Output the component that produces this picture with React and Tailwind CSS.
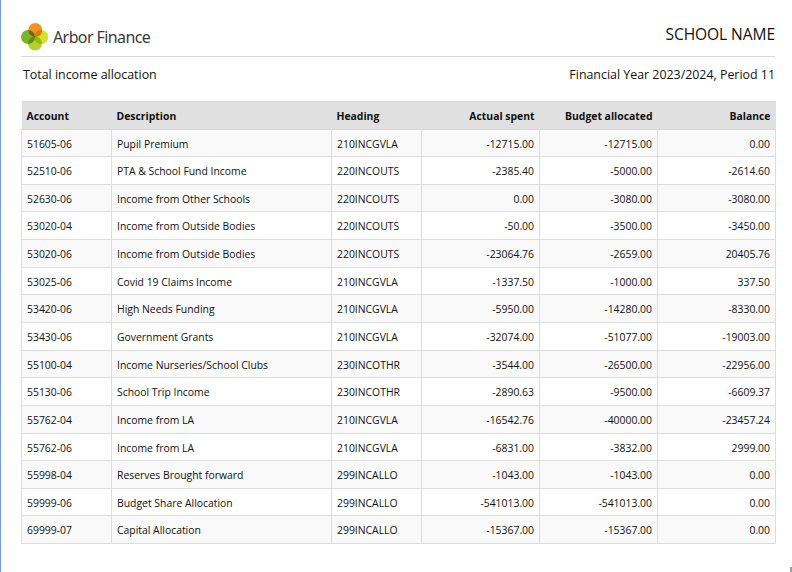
import React from "react";

const rows = [
  ["51605-06", "Pupil Premium", "210INCGVLA", "-12715.00", "-12715.00", "0.00"],
  ["52510-06", "PTA & School Fund Income", "220INCOUTS", "-2385.40", "-5000.00", "-2614.60"],
  ["52630-06", "Income from Other Schools", "220INCOUTS", "0.00", "-3080.00", "-3080.00"],
  ["53020-04", "Income from Outside Bodies", "220INCOUTS", "-50.00", "-3500.00", "-3450.00"],
  ["53020-06", "Income from Outside Bodies", "220INCOUTS", "-23064.76", "-2659.00", "20405.76"],
  ["53025-06", "Covid 19 Claims Income", "210INCGVLA", "-1337.50", "-1000.00", "337.50"],
  ["53420-06", "High Needs Funding", "210INCGVLA", "-5950.00", "-14280.00", "-8330.00"],
  ["53430-06", "Government Grants", "210INCGVLA", "-32074.00", "-51077.00", "-19003.00"],
  ["55100-04", "Income Nurseries/School Clubs", "230INCOTHR", "-3544.00", "-26500.00", "-22956.00"],
  ["55130-06", "School Trip Income", "230INCOTHR", "-2890.63", "-9500.00", "-6609.37"],
  ["55762-04", "Income from LA", "210INCGVLA", "-16542.76", "-40000.00", "-23457.24"],
  ["55762-06", "Income from LA", "210INCGVLA", "-6831.00", "-3832.00", "2999.00"],
  ["55998-04", "Reserves Brought forward", "299INCALLO", "-1043.00", "-1043.00", "0.00"],
  ["59999-06", "Budget Share Allocation", "299INCALLO", "-541013.00", "-541013.00", "0.00"],
  ["69999-07", "Capital Allocation", "299INCALLO", "-15367.00", "-15367.00", "0.00"],
];

const headers = ["Account", "Description", "Heading", "Actual spent", "Budget allocated", "Balance"];

const Logo = () => (
  <svg width="28" height="28" viewBox="0 0 28 28" className="isolate">
    <circle cx="14.3" cy="7" r="7" fill="#f39321" className="mix-blend-multiply" />
    <circle cx="7" cy="14" r="7" fill="#7cb42f" className="mix-blend-multiply" />
    <circle cx="20.3" cy="14" r="7" fill="#d8e02c" className="mix-blend-multiply" />
    <circle cx="14" cy="20.6" r="7" fill="#b4d030" className="mix-blend-multiply" />
  </svg>
);

export default function App() {
  return (
    <div className="relative w-[792px] h-[572px] overflow-hidden bg-white border-l border-[#6d9eeb] pl-5 pr-[17px] text-[#111111] font-['Open_Sans',sans-serif]">
      <div className="flex items-center justify-between h-[57px] pt-[18px] border-b border-[#d9d9d9]">
        <div className="flex items-center gap-[4px]">
          <Logo />
          <span className="text-[16px] tracking-[-0.6px] text-[#3a3a3a] font-['Noto_Sans',sans-serif]">Arbor Finance</span>
        </div>
        <span className="text-[15.6px] mb-[4px] tracking-[-0.1px]">SCHOOL NAME</span>
      </div>
      <div className="flex items-center justify-between h-[36px] pl-[2px] text-[12.4px]">
        <span>Total income allocation</span>
        <span>Financial Year 2023/2024, Period 11</span>
      </div>
      <div className="h-[8px]" />
      <table className="w-[754px] table-fixed border-collapse text-[10.4px] -mt-[0.5px]">
        <colgroup>
          <col className="w-[90px]" />
          <col className="w-[220px]" />
          <col className="w-[90px]" />
          <col className="w-[118px]" />
          <col className="w-[118px]" />
          <col className="w-[118px]" />
        </colgroup>
        <thead>
          <tr className="h-[28px] bg-[#e0e0e0]">
            {headers.map((h, i) => (
              <th key={h} className={`border-y border-[#d9d9d9] px-[5px] pt-[3px] font-bold ${i > 2 ? "text-right" : "text-left"}`}>
                {h}
              </th>
            ))}
          </tr>
        </thead>
        <tbody>
          {rows.map((row, r) => (
            <tr key={r} className={`h-[27.65px] ${r % 2 === 0 ? "bg-[#f9f9f9]" : "bg-white"}`}>
              {row.map((cell, i) => (
                <td key={i} className={`border border-[#dddddd] px-[5px] pt-[3px] whitespace-nowrap ${i > 2 ? "text-right" : "text-left"}`}>
                  {cell}
                </td>
              ))}
            </tr>
          ))}
        </tbody>
      </table>
      {/* window corner mark */}
      <div className="absolute right-0 bottom-0 w-[2px] h-[5px] bg-[#a0a0a0]" />
    </div>
  );
}
